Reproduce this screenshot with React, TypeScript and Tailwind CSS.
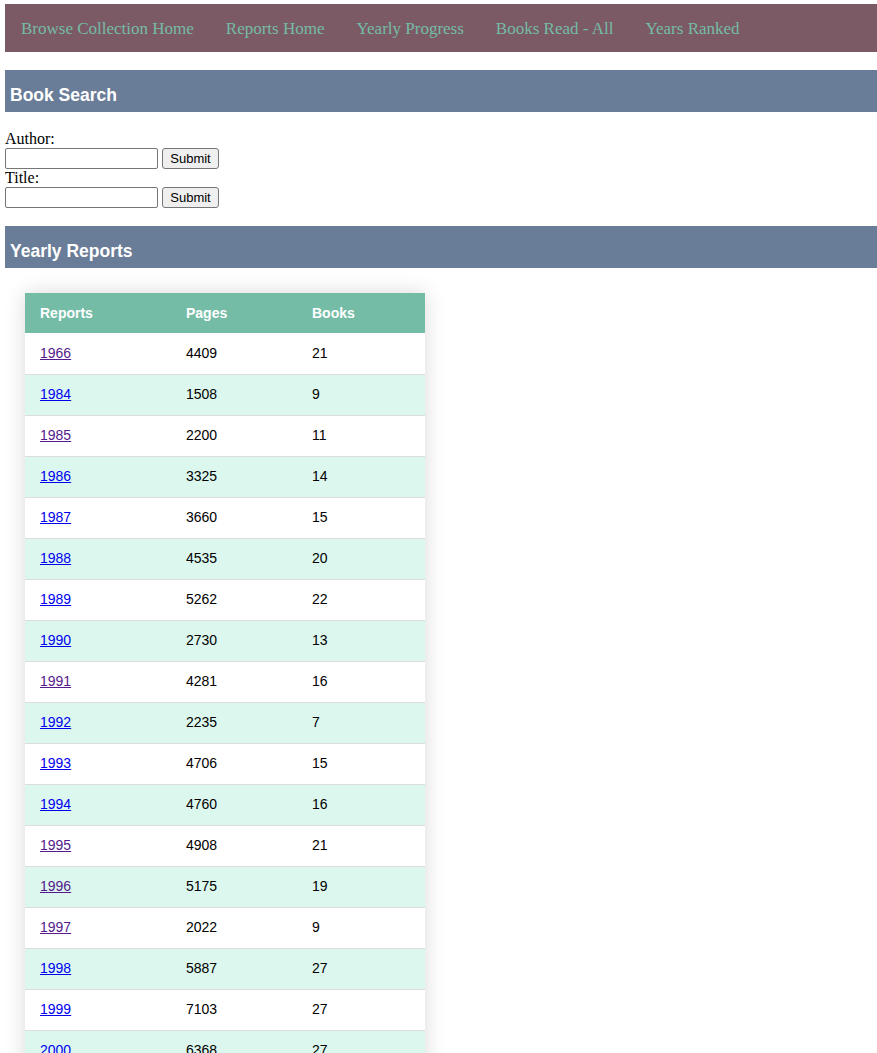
const navLinks = [
  "Browse Collection Home",
  "Reports Home",
  "Yearly Progress",
  "Books Read - All",
  "Years Ranked",
]

const reports = [
  { year: "1966", pages: 4409, books: 21, visited: true },
  { year: "1984", pages: 1508, books: 9, visited: false },
  { year: "1985", pages: 2200, books: 11, visited: true },
  { year: "1986", pages: 3325, books: 14, visited: false },
  { year: "1987", pages: 3660, books: 15, visited: false },
  { year: "1988", pages: 4535, books: 20, visited: false },
  { year: "1989", pages: 5262, books: 22, visited: false },
  { year: "1990", pages: 2730, books: 13, visited: false },
  { year: "1991", pages: 4281, books: 16, visited: true },
  { year: "1992", pages: 2235, books: 7, visited: false },
  { year: "1993", pages: 4706, books: 15, visited: false },
  { year: "1994", pages: 4760, books: 16, visited: false },
  { year: "1995", pages: 4908, books: 21, visited: true },
  { year: "1996", pages: 5175, books: 19, visited: true },
  { year: "1997", pages: 2022, books: 9, visited: true },
  { year: "1998", pages: 5887, books: 27, visited: false },
  { year: "1999", pages: 7103, books: 27, visited: false },
  { year: "2000", pages: 6368, books: 27, visited: false },
  { year: "2001", pages: 5412, books: 22, visited: false },
  { year: "2002", pages: 6021, books: 24, visited: false },
]

function SectionHeader({ title }: { title: string }) {
  return (
    <div className="ml-[5px] flex h-[42px] items-center bg-[#6a7d98] px-[5px] pt-[8px] font-['Liberation_Sans',Arial,sans-serif] text-[17.5px] font-bold text-white">
      {title}
    </div>
  )
}

function SearchRow({ label }: { label: string }) {
  return (
    <>
      <div className="h-[18px] leading-[18px]">{label}</div>
      <div className="flex h-[21px] items-center gap-[4px]">
        <input
          type="text"
          className="h-[21px] w-[153px] rounded-[2px] border border-[#767676] bg-white px-[2px] text-[13px]"
        />
        <button className="h-[21px] w-[57px] rounded-[3px] border border-[#767676] bg-[#efefef] font-['Liberation_Sans',Arial,sans-serif] text-[13px] leading-none text-black">
          Submit
        </button>
      </div>
    </>
  )
}

export default function App() {
  return (
    <div className="min-h-screen bg-white pt-[4px] font-['Liberation_Serif','Times_New_Roman',serif] text-[16px] text-black">
      {/* top nav */}
      <nav className="ml-[5px] flex h-[48px] items-center bg-[#7b5a65]">
        {navLinks.map((l) => (
          <a key={l} href="#" className="px-[16px] pt-[1px] text-[17px] text-[#74bca6] no-underline">
            {l}
          </a>
        ))}
      </nav>

      <div className="mt-[18px]">
        <SectionHeader title="Book Search" />
      </div>

      <form className="ml-[5px] mt-[18px]" onSubmit={(e) => e.preventDefault()}>
        <SearchRow label="Author:" />
        <SearchRow label="Title:" />
      </form>

      <div className="mt-[18px]">
        <SectionHeader title="Yearly Reports" />
      </div>

      <div className="ml-[25px] mt-[25px] w-[400px] shadow-[0_0_20px_rgba(0,0,0,0.15)]">
        <table className="w-full border-collapse font-['Liberation_Sans',Arial,sans-serif] text-[14px]">
          <thead>
            <tr className="h-[40px] bg-[#74bca6] text-left text-white">
              <th className="w-[146px] px-[15px] font-bold">Reports</th>
              <th className="w-[126px] px-[15px] font-bold">Pages</th>
              <th className="px-[15px] font-bold">Books</th>
            </tr>
          </thead>
          <tbody>
            {reports.map((r, i) => (
              <tr
                key={r.year}
                className={`h-[41px] border-b border-[#dddddd] ${i % 2 === 1 ? "bg-[#dcf7ee]" : "bg-white"}`}
              >
                <td className="px-[15px]">
                  <a
                    href="#"
                    className={`underline ${r.visited ? "text-[#551a8b]" : "text-[#0000ee]"}`}
                  >
                    {r.year}
                  </a>
                </td>
                <td className="px-[15px]">{r.pages}</td>
                <td className="px-[15px]">{r.books}</td>
              </tr>
            ))}
          </tbody>
        </table>
      </div>
    </div>
  )
}
